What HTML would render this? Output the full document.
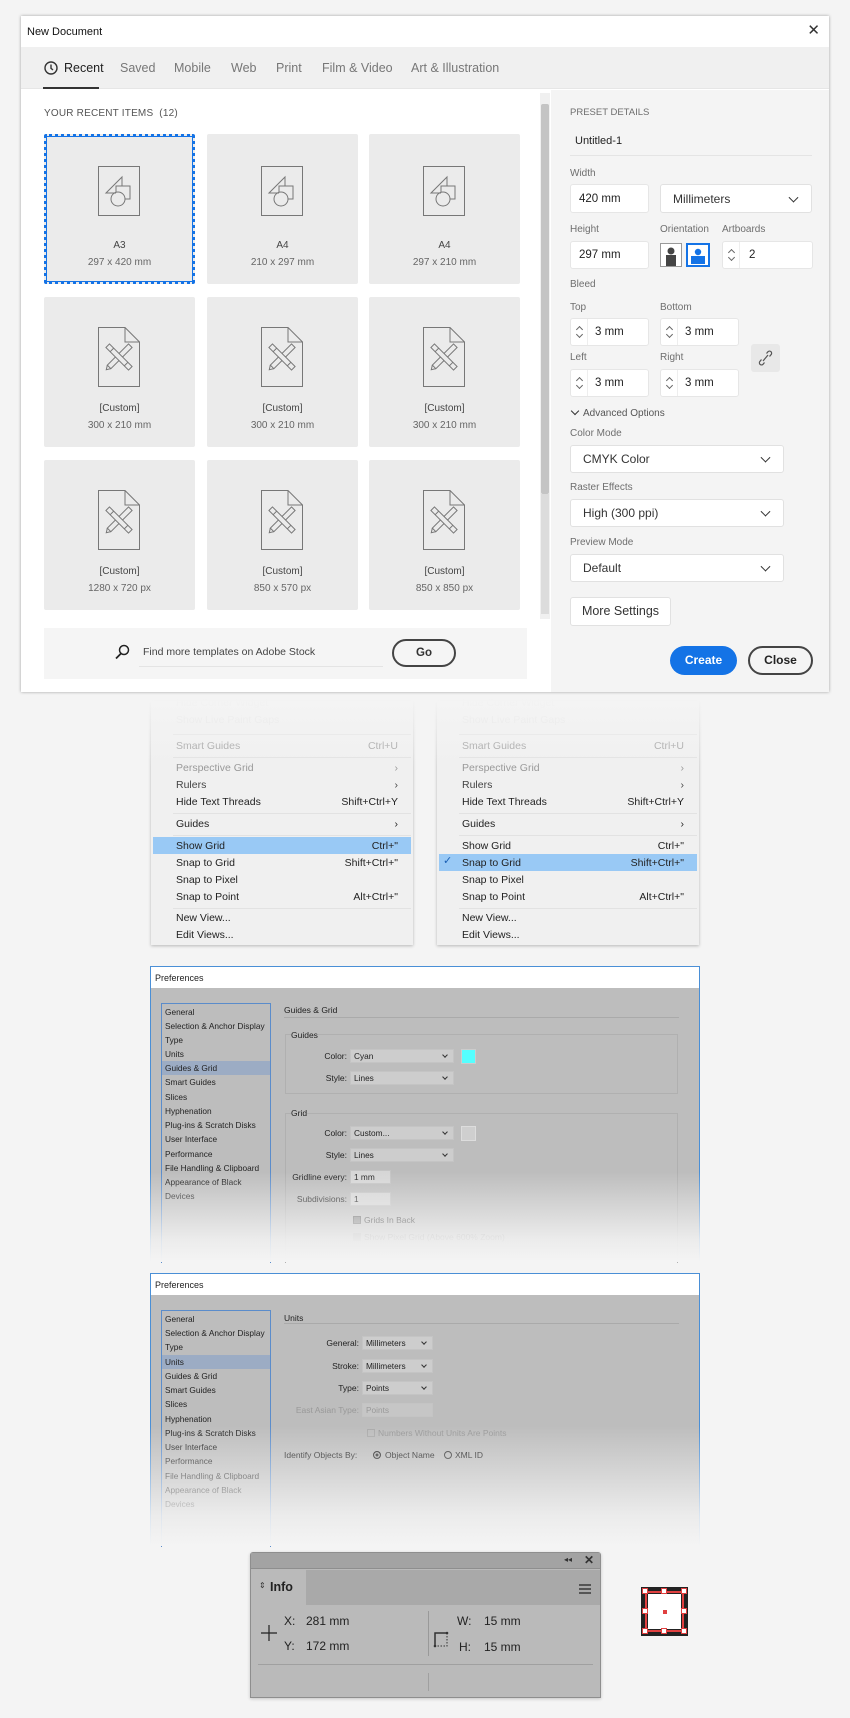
<!DOCTYPE html>
<html><head><meta charset="utf-8"><style>
*{margin:0;padding:0;box-sizing:border-box}
body{width:850px;height:1718px;background:#f4f4f4;font-family:"Liberation Sans",sans-serif;position:relative;overflow:hidden;color:#333}
.a{position:absolute}
.t{position:absolute;white-space:nowrap}
.tile{position:absolute;width:151px;height:150px;background:#ebebeb;border-radius:2px}
.tile svg{position:absolute;left:54px;top:30px}
.tile .l1,.tile .l2{position:absolute;width:100%;text-align:center;font-size:10px;color:#444}
.tile .l1{top:106px}.tile .l2{top:123px;color:#666}
.inp{position:absolute;background:#fff;border:1px solid #e6e6e6;border-radius:3px;font-size:11.5px;color:#222;padding-left:8px;display:flex;align-items:center}
.lab{position:absolute;font-size:10px;color:#6e6e6e}
.dd{position:absolute;background:#fff;border:1px solid #e1e1e1;border-radius:3px;font-size:12px;color:#333;padding-left:12px;display:flex;align-items:center}
.dd:after{content:"";position:absolute;right:14px;top:50%;width:6px;height:6px;border-right:1.6px solid #333;border-bottom:1.6px solid #333;transform:translateY(-70%) rotate(45deg)}
.spin{position:absolute;left:0;top:0;width:17px;height:100%;border-right:1px solid #eee}
.spin:before,.spin:after{content:"";position:absolute;left:6px;width:4px;height:4px;border-left:1px solid #666;border-top:1px solid #666}
.spin:before{top:8px;transform:rotate(45deg)}.spin:after{bottom:8px;transform:rotate(225deg)}
.menu{position:absolute;width:262px;height:244px;background:#f0f0f0;box-shadow:0 1px 3px rgba(0,0,0,.25)}
.menu .fade{position:absolute;left:-4px;right:-4px;top:-4px;height:70px;background:linear-gradient(rgba(244,244,244,1),rgba(244,244,244,.6) 40%,rgba(244,244,244,0))}
.mi{position:absolute;left:25px;right:15px;font-size:10.5px;color:#222;height:16px;line-height:16px}
.mi span{position:absolute;right:0;top:0}
.mi.f{color:#e0e0e0}.mi.g{color:#999}
.sep{position:absolute;left:22px;right:2px;height:1px;background:#e2e2e2}
.hl{position:absolute;left:2px;right:2px;height:17px;background:#99c9f5}
.pref{position:absolute;left:150px;width:550px;background:#bdbdbd;border:1px solid #4a8fd6;border-bottom:none}
.pref .tb{height:21px;background:#fff;font-size:9px;color:#222;padding:6px 0 0 4px}
.pfade{position:absolute;left:-2px;right:-2px;bottom:0;height:110px;background:linear-gradient(rgba(244,244,244,0),rgba(244,244,244,.85) 75%,#f4f4f4)}
.side{position:absolute;left:10px;width:110px;border:1px solid #5a8ccb;border-bottom:none}
.si{position:absolute;left:0;right:0;height:14px;font-size:8.3px;line-height:14px;padding-left:3px;color:#222}
.pl{position:absolute;font-size:8.5px;color:#222;white-space:nowrap}
.ps{position:absolute;background:#cdcdcd;border:1px solid #c4c4c4;height:14px;font-size:8.3px;line-height:12px;padding-left:3px;color:#222}
.ps.d:after{content:"";position:absolute;right:6px;top:3px;width:3px;height:3px;border-right:1px solid #333;border-bottom:1px solid #333;transform:rotate(45deg)}
.hd{position:absolute;width:6px;height:6px;background:#fff;border:1px solid #e04040}
</style></head><body>

<div class="a" style="left:21px;top:16px;width:808px;height:676px;background:#fff;box-shadow:0 0 3px rgba(0,0,0,.35)">
  <div class="t" style="left:6px;top:10px;font-size:11px;color:#111">New Document</div>
  <div class="t" style="right:9px;top:5px;font-size:15px;color:#333">✕</div>
  <div class="a" style="left:0;top:31px;width:808px;height:42px;background:#f0f0f0;border-bottom:1px solid #e6e6e6"></div>
  <svg class="a" style="left:23px;top:45px" width="14" height="14" viewBox="0 0 14 14"><circle cx="7" cy="7" r="6" fill="none" stroke="#333" stroke-width="1.4"/><path d="M7 3.5V7.3L9 9" fill="none" stroke="#333" stroke-width="1.4"/></svg>
  <div class="t" style="left:43px;top:45px;font-size:12.5px;color:#222">Recent</div>
  <div class="a" style="left:22px;top:71px;width:56px;height:2px;background:#333"></div>
  <div class="t" style="left:99px;top:45px;font-size:12.5px;color:#777">Saved</div>
  <div class="t" style="left:153px;top:45px;font-size:12.5px;color:#777">Mobile</div>
  <div class="t" style="left:210px;top:45px;font-size:12.5px;color:#777">Web</div>
  <div class="t" style="left:255px;top:45px;font-size:12.5px;color:#777">Print</div>
  <div class="t" style="left:301px;top:45px;font-size:12.5px;color:#777">Film &amp; Video</div>
  <div class="t" style="left:390px;top:45px;font-size:12.5px;color:#777">Art &amp; Illustration</div>
  <div class="a" style="left:530px;top:74px;width:278px;height:602px;background:#f4f4f4"></div>
  <div class="a" style="left:519px;top:77px;width:10px;height:526px;background:#f0f0f0"></div>
  <div class="a" style="left:520px;top:88px;width:8px;height:390px;background:#c4c4c4;border-radius:2px"></div>
  <div class="a" style="left:520px;top:478px;width:8px;height:120px;background:#dcdcdc"></div>
</div>
<div class="t" style="left:44px;top:108px;font-size:10px;color:#555;letter-spacing:.2px">YOUR RECENT ITEMS&nbsp; (12)</div>

<svg width="0" height="0" style="position:absolute"><defs>
<g id="shp"><rect x="0.5" y="0.5" width="41" height="49" fill="none" stroke="#777"/><path d="M8 27L24 11V27Z" fill="none" stroke="#777"/><rect x="18" y="20" width="14" height="13" fill="#ebebeb" stroke="#777"/><circle cx="20" cy="33" r="7" fill="#ebebeb" stroke="#777"/><path d="M8 27H18" stroke="#777"/></g>
<g id="cst"><path d="M0.5 0.5H27L41.5 15V59.5H0.5Z M27 0.5V15H41.5" fill="none" stroke="#777"/><g transform="translate(21 30) rotate(45)"><rect x="-2.5" y="-16" width="5" height="30" fill="none" stroke="#777"/><path d="M-2.5 14L0 18L2.5 14" fill="none" stroke="#777"/></g><g transform="translate(21 30) rotate(-45)"><rect x="-2.5" y="-16" width="5" height="32" fill="#ebebeb" stroke="#777"/><path d="M-2.5 -10H2.5M-2.5 10H2.5" stroke="#777"/></g></g>
</defs></svg>
<div class="tile" style="left:44px;top:134px;border:3px dotted #1473e6;outline:1px solid #1473e6;outline-offset:-3px"><svg width="43" height="51" style="left:51px;top:29px"><use href="#shp"/></svg><div class="l1" style="top:103px">A3</div><div class="l2" style="top:120px">297 x 420 mm</div></div>
<div class="tile" style="left:207px;top:134px"><svg width="43" height="51" style="top:32px"><use href="#shp"/></svg><div class="l1">A4</div><div class="l2">210 x 297 mm</div></div>
<div class="tile" style="left:369px;top:134px"><svg width="43" height="51" style="top:32px"><use href="#shp"/></svg><div class="l1">A4</div><div class="l2">297 x 210 mm</div></div>
<div class="tile" style="left:44px;top:297px"><svg width="43" height="61" style="top:30px"><use href="#cst"/></svg><div class="l1">[Custom]</div><div class="l2">300 x 210 mm</div></div>
<div class="tile" style="left:207px;top:297px"><svg width="43" height="61" style="top:30px"><use href="#cst"/></svg><div class="l1">[Custom]</div><div class="l2">300 x 210 mm</div></div>
<div class="tile" style="left:369px;top:297px"><svg width="43" height="61" style="top:30px"><use href="#cst"/></svg><div class="l1">[Custom]</div><div class="l2">300 x 210 mm</div></div>
<div class="tile" style="left:44px;top:460px"><svg width="43" height="61" style="top:30px"><use href="#cst"/></svg><div class="l1">[Custom]</div><div class="l2">1280 x 720 px</div></div>
<div class="tile" style="left:207px;top:460px"><svg width="43" height="61" style="top:30px"><use href="#cst"/></svg><div class="l1">[Custom]</div><div class="l2">850 x 570 px</div></div>
<div class="tile" style="left:369px;top:460px"><svg width="43" height="61" style="top:30px"><use href="#cst"/></svg><div class="l1">[Custom]</div><div class="l2">850 x 850 px</div></div>

<div class="a" style="left:44px;top:628px;width:483px;height:51px;background:#f5f5f5"></div>
<svg class="a" style="left:114px;top:644px" width="16" height="16" viewBox="0 0 16 16"><circle cx="10" cy="6" r="4.5" fill="none" stroke="#222" stroke-width="1.5"/><path d="M7 9.5L2 14.5" stroke="#222" stroke-width="1.8"/></svg>
<div class="t" style="left:143px;top:646px;font-size:10.5px;color:#444">Find more templates on Adobe Stock</div>
<div class="a" style="left:139px;top:666px;width:244px;height:1px;background:#e4e4e4"></div>
<div class="a" style="left:392px;top:639px;width:64px;height:28px;border:2px solid #444;border-radius:14px;font-size:11.5px;color:#333;text-align:center;line-height:24px;font-weight:bold">Go</div>

<div class="t" style="left:570px;top:107px;font-size:9.5px;color:#6e6e6e">PRESET DETAILS</div>
<div class="t" style="left:575px;top:135px;font-size:11px;color:#222">Untitled-1</div>
<div class="a" style="left:570px;top:155px;width:242px;height:1px;background:#e4e4e4"></div>
<div class="lab" style="left:570px;top:168px">Width</div>
<div class="inp" style="left:570px;top:184px;width:79px;height:29px">420 mm</div>
<div class="dd" style="left:660px;top:184px;width:152px;height:29px">Millimeters</div>
<div class="lab" style="left:570px;top:224px">Height</div>
<div class="lab" style="left:660px;top:224px">Orientation</div>
<div class="lab" style="left:722px;top:224px">Artboards</div>
<div class="inp" style="left:570px;top:241px;width:79px;height:28px">297 mm</div>
<div class="a" style="left:660px;top:243px;width:22px;height:24px;background:#fff;border:1px solid #999"><svg width="20" height="22"><circle cx="10" cy="7" r="3.5" fill="#444"/><rect x="5" y="11" width="10" height="11" fill="#444"/></svg></div>
<div class="a" style="left:686px;top:243px;width:24px;height:24px;background:#fff;border:2px solid #1473e6"><svg width="20" height="20"><circle cx="10" cy="7" r="3.2" fill="#1473e6"/><rect x="3" y="11" width="14" height="8" fill="#1473e6"/></svg></div>
<div class="inp" style="left:722px;top:241px;width:91px;height:28px;padding-left:26px"><div class="spin"></div>2</div>
<div class="lab" style="left:570px;top:279px">Bleed</div>
<div class="lab" style="left:570px;top:302px">Top</div>
<div class="lab" style="left:660px;top:302px">Bottom</div>
<div class="inp" style="left:570px;top:318px;width:79px;height:28px;padding-left:24px"><div class="spin"></div>3 mm</div>
<div class="inp" style="left:660px;top:318px;width:79px;height:28px;padding-left:24px"><div class="spin"></div>3 mm</div>
<div class="a" style="left:751px;top:344px;width:29px;height:28px;background:#e8e8e8;border-radius:3px"><svg width="29" height="28" viewBox="0 0 29 28"><path d="M12 17l5-6M10.5 15.5l-1.5 1.8a2 2 0 003 3l1.5-1.8M18.5 12.5l1.5-1.8a2 2 0 00-3-3l-1.5 1.8" fill="none" stroke="#555" stroke-width="1.2"/></svg></div>
<div class="lab" style="left:570px;top:352px">Left</div>
<div class="lab" style="left:660px;top:352px">Right</div>
<div class="inp" style="left:570px;top:369px;width:79px;height:28px;padding-left:24px"><div class="spin"></div>3 mm</div>
<div class="inp" style="left:660px;top:369px;width:79px;height:28px;padding-left:24px"><div class="spin"></div>3 mm</div>
<div class="t" style="left:570px;top:408px;font-size:10px;color:#555"><span style="display:inline-block;width:6px;height:6px;border-right:1.5px solid #333;border-bottom:1.5px solid #333;transform:rotate(45deg);margin:0 5px 2px 2px"></span>Advanced Options</div>
<div class="lab" style="left:570px;top:428px">Color Mode</div>
<div class="dd" style="left:570px;top:445px;width:214px;height:28px">CMYK Color</div>
<div class="lab" style="left:570px;top:482px">Raster Effects</div>
<div class="dd" style="left:570px;top:499px;width:214px;height:28px">High (300 ppi)</div>
<div class="lab" style="left:570px;top:537px">Preview Mode</div>
<div class="dd" style="left:570px;top:554px;width:214px;height:28px">Default</div>
<div class="a" style="left:570px;top:597px;width:101px;height:29px;background:#fff;border:1px solid #e1e1e1;border-radius:3px;font-size:12.5px;color:#333;text-align:center;line-height:27px">More Settings</div>
<div class="a" style="left:670px;top:646px;width:67px;height:29px;background:#1473e6;border-radius:15px;font-size:12px;color:#fff;text-align:center;line-height:29px;font-weight:bold">Create</div>
<div class="a" style="left:748px;top:646px;width:65px;height:29px;border:2px solid #444;border-radius:15px;font-size:12px;color:#222;text-align:center;line-height:25px;font-weight:bold">Close</div>

<div class="menu" style="left:151px;top:701px">
  <div class="mi f" style="top:-6px">Hide Corner Widget</div>
  <div class="mi f" style="top:11px">Show Live Paint Gaps</div>
  <div class="sep" style="top:33px"></div>
  <div class="mi g" style="top:37px">Smart Guides<span>Ctrl+U</span></div>
  <div class="sep" style="top:56px"></div>
  <div class="mi g" style="top:59px">Perspective Grid<span>›</span></div>
  <div class="mi" style="top:76px;color:#444">Rulers<span>›</span></div>
  <div class="mi" style="top:93px">Hide Text Threads<span>Shift+Ctrl+Y</span></div>
  <div class="sep" style="top:112px"></div>
  <div class="mi" style="top:115px">Guides<span>›</span></div>
  <div class="sep" style="top:134px"></div>
  <div class="hl" style="top:136px"></div>
  <div class="mi" style="top:137px">Show Grid<span>Ctrl+"</span></div>
  <div class="mi" style="top:154px">Snap to Grid<span>Shift+Ctrl+"</span></div>
  <div class="mi" style="top:171px">Snap to Pixel</div>
  <div class="mi" style="top:188px">Snap to Point<span>Alt+Ctrl+"</span></div>
  <div class="sep" style="top:207px"></div>
  <div class="mi" style="top:209px">New View...</div>
  <div class="mi" style="top:226px">Edit Views...</div>
  <div class="fade"></div>
</div>
<div class="menu" style="left:437px;top:701px">
  <div class="mi f" style="top:-6px">Hide Corner Widget</div>
  <div class="mi f" style="top:11px">Show Live Paint Gaps</div>
  <div class="sep" style="top:33px"></div>
  <div class="mi g" style="top:37px">Smart Guides<span>Ctrl+U</span></div>
  <div class="sep" style="top:56px"></div>
  <div class="mi g" style="top:59px">Perspective Grid<span>›</span></div>
  <div class="mi" style="top:76px;color:#444">Rulers<span>›</span></div>
  <div class="mi" style="top:93px">Hide Text Threads<span>Shift+Ctrl+Y</span></div>
  <div class="sep" style="top:112px"></div>
  <div class="mi" style="top:115px">Guides<span>›</span></div>
  <div class="sep" style="top:134px"></div>
  <div class="mi" style="top:137px">Show Grid<span>Ctrl+"</span></div>
  <div class="hl" style="top:153px"></div>
  <div class="t" style="left:6px;top:153px;font-size:11px;color:#1a5fb4">✓</div>
  <div class="mi" style="top:154px">Snap to Grid<span>Shift+Ctrl+"</span></div>
  <div class="mi" style="top:171px">Snap to Pixel</div>
  <div class="mi" style="top:188px">Snap to Point<span>Alt+Ctrl+"</span></div>
  <div class="sep" style="top:207px"></div>
  <div class="mi" style="top:209px">New View...</div>
  <div class="mi" style="top:226px">Edit Views...</div>
  <div class="fade"></div>
</div>

<div class="pref" style="top:966px;height:296px">
  <div class="tb">Preferences</div>
  <div class="side" style="top:36px;height:260px">
    <div class="si" style="top:1px">General</div>
    <div class="si" style="top:15px">Selection &amp; Anchor Display</div>
    <div class="si" style="top:29px">Type</div>
    <div class="si" style="top:43px">Units</div>
    <div class="si" style="top:57px;background:#9cacc4">Guides &amp; Grid</div>
    <div class="si" style="top:71px">Smart Guides</div>
    <div class="si" style="top:86px">Slices</div>
    <div class="si" style="top:100px">Hyphenation</div>
    <div class="si" style="top:114px">Plug-ins &amp; Scratch Disks</div>
    <div class="si" style="top:128px">User Interface</div>
    <div class="si" style="top:143px">Performance</div>
    <div class="si" style="top:157px">File Handling &amp; Clipboard</div>
    <div class="si" style="top:171px">Appearance of Black</div>
    <div class="si" style="top:185px">Devices</div>
  </div>
  <div class="pl" style="left:133px;top:38px">Guides &amp; Grid</div>
  <div class="a" style="left:133px;top:50px;width:395px;height:1px;background:#aaa"></div>
  <div class="a" style="left:134px;top:67px;width:393px;height:60px;border:1px solid #b0b0b0"></div>
  <div class="pl" style="left:140px;top:63px;background:#bdbdbd">Guides</div>
  <div class="pl" style="left:160px;top:84px;width:36px;text-align:right">Color:</div>
  <div class="ps d" style="left:199px;top:82px;width:104px">Cyan</div>
  <div class="a" style="left:310px;top:82px;width:15px;height:15px;background:#55ffff;border:1px solid #ccc"></div>
  <div class="pl" style="left:160px;top:106px;width:36px;text-align:right">Style:</div>
  <div class="ps d" style="left:199px;top:104px;width:104px">Lines</div>
  <div class="a" style="left:134px;top:146px;width:393px;height:150px;border:1px solid #b0b0b0;border-bottom:none"></div>
  <div class="pl" style="left:140px;top:141px;background:#bdbdbd">Grid</div>
  <div class="pl" style="left:160px;top:161px;width:36px;text-align:right">Color:</div>
  <div class="ps d" style="left:199px;top:159px;width:104px">Custom...</div>
  <div class="a" style="left:310px;top:159px;width:15px;height:15px;background:#cfcfcf;border:1px solid #ddd"></div>
  <div class="pl" style="left:160px;top:183px;width:36px;text-align:right">Style:</div>
  <div class="ps d" style="left:199px;top:181px;width:104px">Lines</div>
  <div class="pl" style="left:110px;top:205px;width:86px;text-align:right">Gridline every:</div>
  <div class="ps" style="left:199px;top:203px;width:41px;background:#d6d6d6">1 mm</div>
  <div class="pl" style="left:110px;top:227px;width:86px;text-align:right">Subdivisions:</div>
  <div class="ps" style="left:199px;top:225px;width:41px;background:#d6d6d6">1</div>
  <div class="a" style="left:202px;top:249px;width:8px;height:8px;background:#777;border:1px solid #555"></div>
  <div class="pl" style="left:213px;top:248px">Grids In Back</div>
  <div class="a" style="left:202px;top:266px;width:8px;height:8px;background:#aaa"></div>
  <div class="pl" style="left:213px;top:265px;color:#888">Show Pixel Grid (Above 600% Zoom)</div>
  <div class="pfade" style="height:90px"></div>
</div>

<div class="pref" style="top:1273px;height:273px">
  <div class="tb">Preferences</div>
  <div class="side" style="top:36px;height:237px">
    <div class="si" style="top:1px">General</div>
    <div class="si" style="top:15px">Selection &amp; Anchor Display</div>
    <div class="si" style="top:29px">Type</div>
    <div class="si" style="top:44px;background:#9cacc4">Units</div>
    <div class="si" style="top:58px">Guides &amp; Grid</div>
    <div class="si" style="top:72px">Smart Guides</div>
    <div class="si" style="top:86px">Slices</div>
    <div class="si" style="top:101px">Hyphenation</div>
    <div class="si" style="top:115px">Plug-ins &amp; Scratch Disks</div>
    <div class="si" style="top:129px">User Interface</div>
    <div class="si" style="top:143px">Performance</div>
    <div class="si" style="top:158px">File Handling &amp; Clipboard</div>
    <div class="si" style="top:172px">Appearance of Black</div>
    <div class="si" style="top:186px">Devices</div>
  </div>
  <div class="pl" style="left:133px;top:39px">Units</div>
  <div class="a" style="left:133px;top:49px;width:395px;height:1px;background:#aaa"></div>
  <div class="pl" style="left:130px;top:64px;width:78px;text-align:right">General:</div>
  <div class="ps d" style="left:211px;top:62px;width:71px">Millimeters</div>
  <div class="pl" style="left:130px;top:87px;width:78px;text-align:right">Stroke:</div>
  <div class="ps d" style="left:211px;top:85px;width:71px">Millimeters</div>
  <div class="pl" style="left:130px;top:109px;width:78px;text-align:right">Type:</div>
  <div class="ps d" style="left:211px;top:107px;width:71px">Points</div>
  <div class="pl" style="left:110px;top:131px;width:98px;text-align:right;color:#999">East Asian Type:</div>
  <div class="ps" style="left:211px;top:129px;width:71px;color:#999;background:#c6c6c6">Points</div>
  <div class="a" style="left:216px;top:155px;width:8px;height:8px;border:1px solid #aaa"></div>
  <div class="pl" style="left:227px;top:154px;color:#999">Numbers Without Units Are Points</div>
  <div class="pl" style="left:133px;top:176px">Identify Objects By:</div>
  <div class="a" style="left:222px;top:177px;width:8px;height:8px;border-radius:50%;background:#333;border:1px solid #222;box-shadow:inset 0 0 0 1.5px #bbb"></div>
  <div class="pl" style="left:234px;top:176px">Object Name</div>
  <div class="a" style="left:293px;top:177px;width:8px;height:8px;border-radius:50%;border:1px solid #333"></div>
  <div class="pl" style="left:304px;top:176px">XML ID</div>
  <div class="pfade" style="height:120px"></div>
</div>

<div class="a" style="left:250px;top:1552px;width:351px;height:146px;background:#bababa;border:1px solid #8e8e8e;border-radius:3px 3px 0 0;box-shadow:0 1px 3px rgba(0,0,0,.2)">
  <div class="a" style="left:0;top:0;width:349px;height:16px;background:#a3a3a3;border-bottom:1px solid #8e8e8e"></div>
  <div class="t" style="left:313px;top:2px;font-size:8px;color:#333">◂◂</div>
  <div class="t" style="left:333px;top:0;font-size:12px;color:#333;font-weight:bold">✕</div>
  <div class="a" style="left:55px;top:17px;width:294px;height:35px;background:#a9a9a9"></div>
  <div class="t" style="left:8px;top:28px;font-size:8px;color:#333">⇕</div>
  <div class="t" style="left:19px;top:27px;font-size:12.5px;color:#222;font-weight:bold">Info</div>
  <div class="a" style="left:328px;top:31px;width:12px;height:1.5px;background:#555;box-shadow:0 4px #555,0 8px #555"></div>
  <svg class="a" style="left:10px;top:72px" width="16" height="16"><path d="M8 0V16M0 8H16" stroke="#222" stroke-width="1.2"/></svg>
  <div class="t" style="left:33px;top:61px;font-size:12px;color:#222">X:</div>
  <div class="t" style="left:55px;top:61px;font-size:12px;color:#222">281 mm</div>
  <div class="t" style="left:33px;top:86px;font-size:12px;color:#222">Y:</div>
  <div class="t" style="left:55px;top:86px;font-size:12px;color:#222">172 mm</div>
  <div class="a" style="left:177px;top:58px;width:1px;height:45px;background:#999"></div>
  <svg class="a" style="left:182px;top:77px" width="18" height="18"><path d="M2 16V3H14" fill="none" stroke="#333" stroke-width="1.5"/><path d="M14 3V16H2" fill="none" stroke="#333" stroke-dasharray="1.5 1.5"/><circle cx="14" cy="3" r="1.3" fill="#333"/><circle cx="2" cy="16" r="1.3" fill="#333"/></svg>
  <div class="t" style="left:206px;top:61px;font-size:12px;color:#222">W:</div>
  <div class="t" style="left:233px;top:61px;font-size:12px;color:#222">15 mm</div>
  <div class="t" style="left:208px;top:87px;font-size:12px;color:#222">H:</div>
  <div class="t" style="left:233px;top:87px;font-size:12px;color:#222">15 mm</div>
  <div class="a" style="left:7px;top:111px;width:335px;height:1px;background:#a0a0a0"></div>
  <div class="a" style="left:177px;top:120px;width:1px;height:18px;background:#a0a0a0"></div>
</div>

<div class="a" style="left:641px;top:1587px;width:47px;height:49px;background:#222"></div>
<div class="a" style="left:645px;top:1591px;width:39px;height:41px;border:2px solid #e04040;background:#222"></div>
<div class="a" style="left:648px;top:1594px;width:33px;height:35px;background:#fff"></div>
<div class="a" style="left:663px;top:1610px;width:4px;height:4px;background:#e04040"></div>
<div class="hd" style="left:642px;top:1588px"></div>
<div class="hd" style="left:661px;top:1588px"></div>
<div class="hd" style="left:681px;top:1588px"></div>
<div class="hd" style="left:642px;top:1608px"></div>
<div class="hd" style="left:681px;top:1608px"></div>
<div class="hd" style="left:642px;top:1628px"></div>
<div class="hd" style="left:661px;top:1628px"></div>
<div class="hd" style="left:681px;top:1628px"></div>
</body></html>
